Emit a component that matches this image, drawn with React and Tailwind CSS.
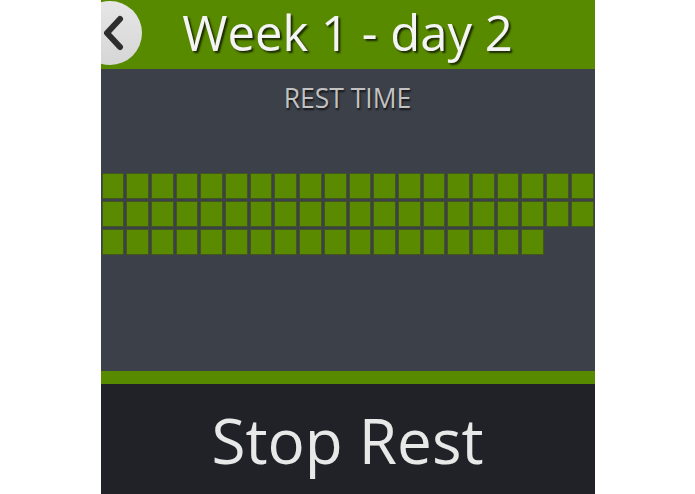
import React from "react";

const font = { fontFamily: '"Open Sans", "Noto Sans", sans-serif' };

function Cell({ on }) {
  if (!on) return <div className="h-[26px]" />;
  return <div className="h-[26px] bg-[#5a8a00] border border-[#44561f]" />;
}

export default function App() {
  const rows = [20, 20, 18];
  return (
    <div className="w-full h-[494px] bg-white flex justify-center" style={font}>
      <div className="w-[494px] h-[494px] flex flex-col overflow-hidden">
        <div className="relative h-[69px] shrink-0 bg-[#588a00] flex items-center justify-center overflow-hidden">
          <div className="absolute left-[-23px] top-[1px] w-[64px] h-[64px] rounded-full bg-gradient-to-b from-[#e6e6e6] to-[#d6d6d6] flex items-center justify-end pr-[17px]">
            <svg width="22" height="36" viewBox="0 0 22 36">
              <path d="M17 4 L4 18 L17 32" fill="none" stroke="#2e2e2e" strokeWidth="6" strokeLinecap="round" strokeLinejoin="round" />
            </svg>
          </div>
          <span
            className="text-[49px] leading-none text-[#f4f4f4] mt-[-4px]"
            style={{ textShadow: "2px 2px 2px rgba(0,0,0,0.7)" }}
          >
            Week 1 - day 2
          </span>
        </div>
        <div className="flex-1 bg-[#3c4049] flex flex-col">
          <div
            className="text-center text-[26.5px] leading-none text-[#c2c2c2] mt-[16px]"
            style={{ textShadow: "1px 2px 2px rgba(0,0,0,0.7)" }}
          >
            REST TIME
          </div>
          <div className="mt-[61px] px-[1px] flex flex-col gap-[2px]">
            {rows.map((n, r) => (
              <div key={r} className="grid grid-cols-20 gap-[2px]">
                {Array.from({ length: 20 }).map((_, i) => (
                  <Cell key={i} on={i < n} />
                ))}
              </div>
            ))}
          </div>
        </div>
        <div className="h-[13px] shrink-0 bg-[#588a00]" />
        <div className="h-[110px] shrink-0 bg-[#212227] flex items-center justify-center">
          <span className="text-[62px] leading-none text-[#e8e8e8] mt-[2px]">Stop Rest</span>
        </div>
      </div>
    </div>
  );
}
